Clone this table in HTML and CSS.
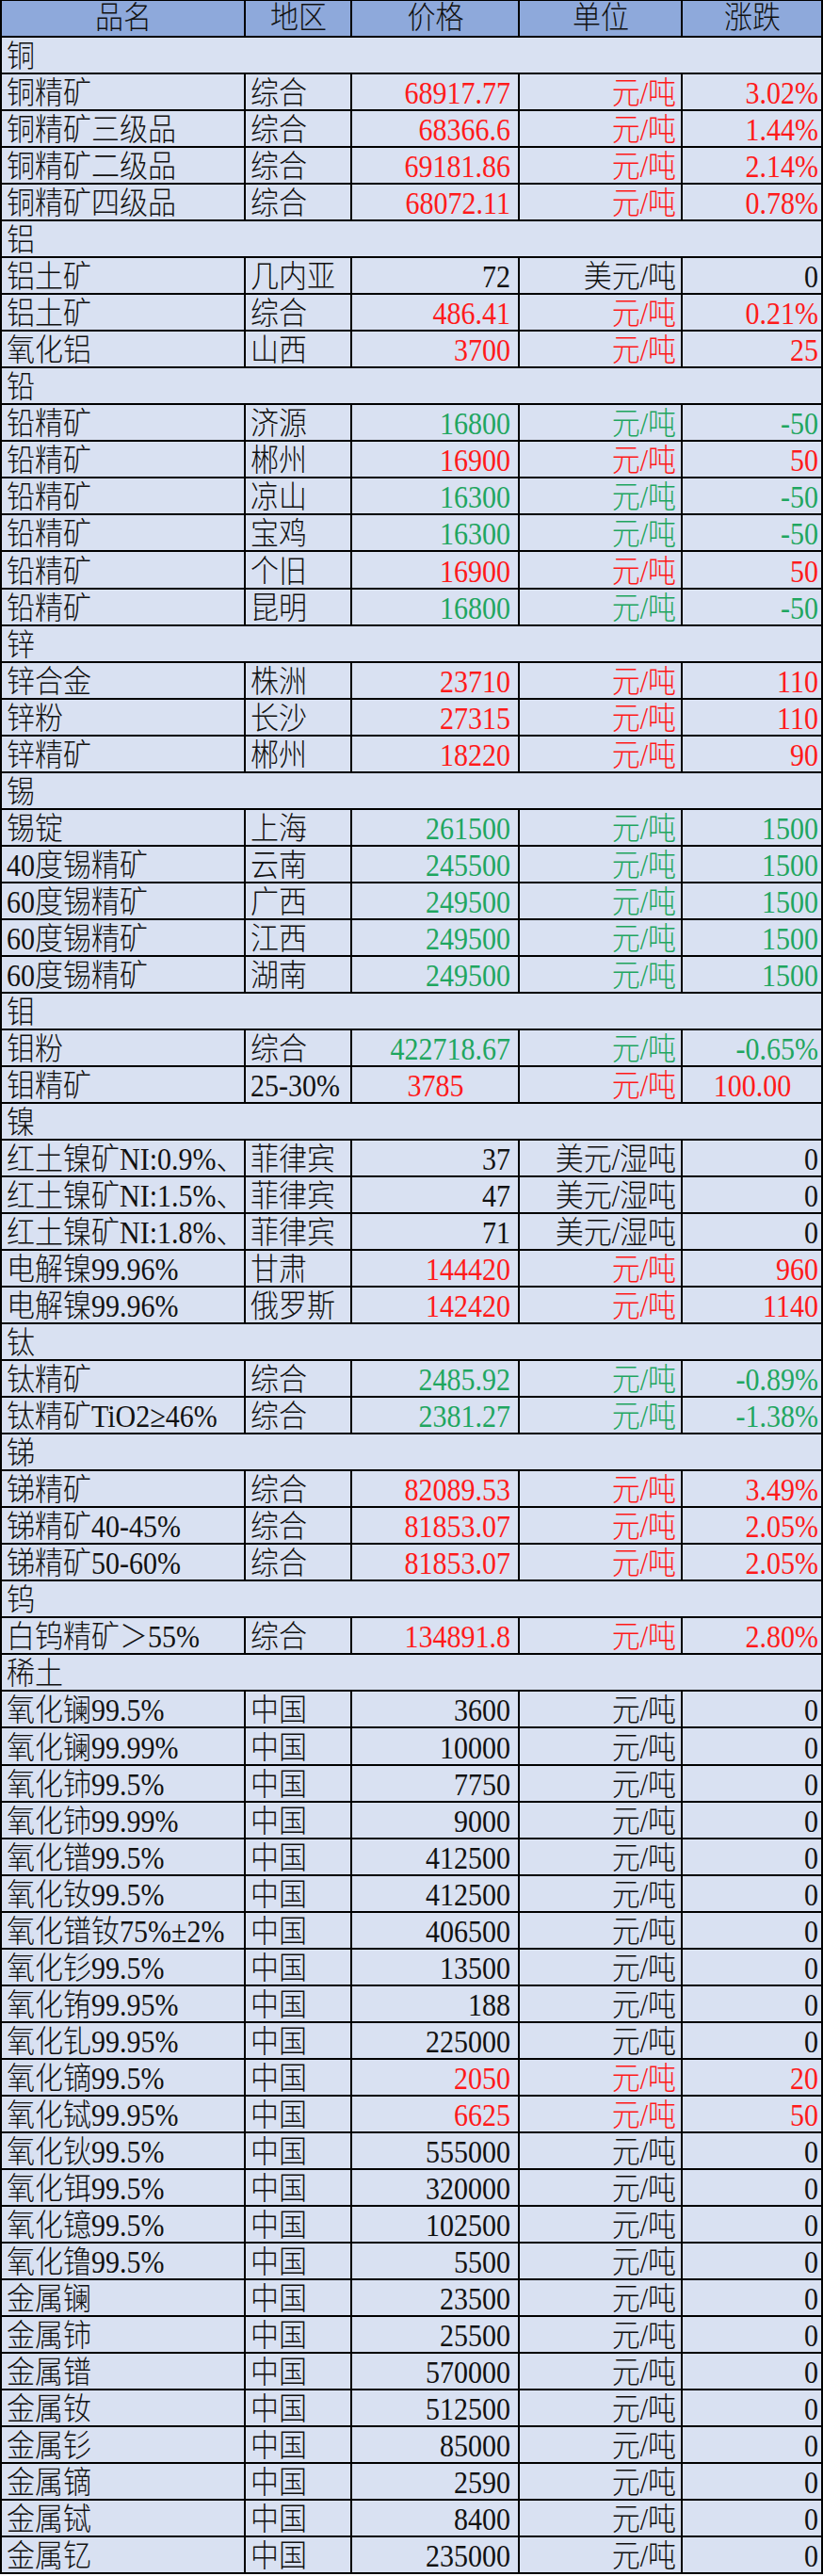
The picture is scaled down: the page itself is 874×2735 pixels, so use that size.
FILE: index.html
```html
<!DOCTYPE html>
<html lang="zh-CN">
<head>
<meta charset="utf-8">
<title>金属价格</title>
<link rel="stylesheet" href="styles.css">
</head>
<body>
<div class="t">
  <div class="c h"><span>品名</span></div><div class="c h"><span>地区</span></div><div class="c h"><span>价格</span></div><div class="c h"><span>单位</span></div><div class="c h"><span>涨跌</span></div>

  <div class="c sec"><span>铜</span></div>
  <div class="c"><span>铜精矿</span></div><div class="c"><span>综合</span></div><div class="c r red"><span>68917.77</span></div><div class="c u red"><span>元/吨</span></div><div class="c d red"><span>3.02%</span></div>
  <div class="c"><span>铜精矿三级品</span></div><div class="c"><span>综合</span></div><div class="c r red"><span>68366.6</span></div><div class="c u red"><span>元/吨</span></div><div class="c d red"><span>1.44%</span></div>
  <div class="c"><span>铜精矿二级品</span></div><div class="c"><span>综合</span></div><div class="c r red"><span>69181.86</span></div><div class="c u red"><span>元/吨</span></div><div class="c d red"><span>2.14%</span></div>
  <div class="c"><span>铜精矿四级品</span></div><div class="c"><span>综合</span></div><div class="c r red"><span>68072.11</span></div><div class="c u red"><span>元/吨</span></div><div class="c d red"><span>0.78%</span></div>

  <div class="c sec"><span>铝</span></div>
  <div class="c"><span>铝土矿</span></div><div class="c"><span>几内亚</span></div><div class="c r"><span>72</span></div><div class="c u"><span>美元/吨</span></div><div class="c d"><span>0</span></div>
  <div class="c"><span>铝土矿</span></div><div class="c"><span>综合</span></div><div class="c r red"><span>486.41</span></div><div class="c u red"><span>元/吨</span></div><div class="c d red"><span>0.21%</span></div>
  <div class="c"><span>氧化铝</span></div><div class="c"><span>山西</span></div><div class="c r red"><span>3700</span></div><div class="c u red"><span>元/吨</span></div><div class="c d red"><span>25</span></div>

  <div class="c sec"><span>铅</span></div>
  <div class="c"><span>铅精矿</span></div><div class="c"><span>济源</span></div><div class="c r grn"><span>16800</span></div><div class="c u grn"><span>元/吨</span></div><div class="c d grn"><span>-50</span></div>
  <div class="c"><span>铅精矿</span></div><div class="c"><span>郴州</span></div><div class="c r red"><span>16900</span></div><div class="c u red"><span>元/吨</span></div><div class="c d red"><span>50</span></div>
  <div class="c"><span>铅精矿</span></div><div class="c"><span>凉山</span></div><div class="c r grn"><span>16300</span></div><div class="c u grn"><span>元/吨</span></div><div class="c d grn"><span>-50</span></div>
  <div class="c"><span>铅精矿</span></div><div class="c"><span>宝鸡</span></div><div class="c r grn"><span>16300</span></div><div class="c u grn"><span>元/吨</span></div><div class="c d grn"><span>-50</span></div>
  <div class="c"><span>铅精矿</span></div><div class="c"><span>个旧</span></div><div class="c r red"><span>16900</span></div><div class="c u red"><span>元/吨</span></div><div class="c d red"><span>50</span></div>
  <div class="c"><span>铅精矿</span></div><div class="c"><span>昆明</span></div><div class="c r grn"><span>16800</span></div><div class="c u grn"><span>元/吨</span></div><div class="c d grn"><span>-50</span></div>

  <div class="c sec"><span>锌</span></div>
  <div class="c"><span>锌合金</span></div><div class="c"><span>株洲</span></div><div class="c r red"><span>23710</span></div><div class="c u red"><span>元/吨</span></div><div class="c d red"><span>110</span></div>
  <div class="c"><span>锌粉</span></div><div class="c"><span>长沙</span></div><div class="c r red"><span>27315</span></div><div class="c u red"><span>元/吨</span></div><div class="c d red"><span>110</span></div>
  <div class="c"><span>锌精矿</span></div><div class="c"><span>郴州</span></div><div class="c r red"><span>18220</span></div><div class="c u red"><span>元/吨</span></div><div class="c d red"><span>90</span></div>

  <div class="c sec"><span>锡</span></div>
  <div class="c"><span>锡锭</span></div><div class="c"><span>上海</span></div><div class="c r grn"><span>261500</span></div><div class="c u grn"><span>元/吨</span></div><div class="c d grn"><span>1500</span></div>
  <div class="c"><span>40度锡精矿</span></div><div class="c"><span>云南</span></div><div class="c r grn"><span>245500</span></div><div class="c u grn"><span>元/吨</span></div><div class="c d grn"><span>1500</span></div>
  <div class="c"><span>60度锡精矿</span></div><div class="c"><span>广西</span></div><div class="c r grn"><span>249500</span></div><div class="c u grn"><span>元/吨</span></div><div class="c d grn"><span>1500</span></div>
  <div class="c"><span>60度锡精矿</span></div><div class="c"><span>江西</span></div><div class="c r grn"><span>249500</span></div><div class="c u grn"><span>元/吨</span></div><div class="c d grn"><span>1500</span></div>
  <div class="c"><span>60度锡精矿</span></div><div class="c"><span>湖南</span></div><div class="c r grn"><span>249500</span></div><div class="c u grn"><span>元/吨</span></div><div class="c d grn"><span>1500</span></div>

  <div class="c sec"><span>钼</span></div>
  <div class="c"><span>钼粉</span></div><div class="c"><span>综合</span></div><div class="c r grn"><span>422718.67</span></div><div class="c u grn"><span>元/吨</span></div><div class="c d grn"><span>-0.65%</span></div>
  <div class="c"><span>钼精矿</span></div><div class="c"><span>25-30%</span></div><div class="c m red"><span>3785</span></div><div class="c u red"><span>元/吨</span></div><div class="c m red"><span>100.00</span></div>

  <div class="c sec"><span>镍</span></div>
  <div class="c"><span>红土镍矿NI:0.9%、</span></div><div class="c"><span>菲律宾</span></div><div class="c r"><span>37</span></div><div class="c u"><span>美元/湿吨</span></div><div class="c d"><span>0</span></div>
  <div class="c"><span>红土镍矿NI:1.5%、</span></div><div class="c"><span>菲律宾</span></div><div class="c r"><span>47</span></div><div class="c u"><span>美元/湿吨</span></div><div class="c d"><span>0</span></div>
  <div class="c"><span>红土镍矿NI:1.8%、</span></div><div class="c"><span>菲律宾</span></div><div class="c r"><span>71</span></div><div class="c u"><span>美元/湿吨</span></div><div class="c d"><span>0</span></div>
  <div class="c"><span>电解镍99.96%</span></div><div class="c"><span>甘肃</span></div><div class="c r red"><span>144420</span></div><div class="c u red"><span>元/吨</span></div><div class="c d red"><span>960</span></div>
  <div class="c"><span>电解镍99.96%</span></div><div class="c"><span>俄罗斯</span></div><div class="c r red"><span>142420</span></div><div class="c u red"><span>元/吨</span></div><div class="c d red"><span>1140</span></div>

  <div class="c sec"><span>钛</span></div>
  <div class="c"><span>钛精矿</span></div><div class="c"><span>综合</span></div><div class="c r grn"><span>2485.92</span></div><div class="c u grn"><span>元/吨</span></div><div class="c d grn"><span>-0.89%</span></div>
  <div class="c"><span>钛精矿TiO2≥46%</span></div><div class="c"><span>综合</span></div><div class="c r grn"><span>2381.27</span></div><div class="c u grn"><span>元/吨</span></div><div class="c d grn"><span>-1.38%</span></div>

  <div class="c sec"><span>锑</span></div>
  <div class="c"><span>锑精矿</span></div><div class="c"><span>综合</span></div><div class="c r red"><span>82089.53</span></div><div class="c u red"><span>元/吨</span></div><div class="c d red"><span>3.49%</span></div>
  <div class="c"><span>锑精矿40-45%</span></div><div class="c"><span>综合</span></div><div class="c r red"><span>81853.07</span></div><div class="c u red"><span>元/吨</span></div><div class="c d red"><span>2.05%</span></div>
  <div class="c"><span>锑精矿50-60%</span></div><div class="c"><span>综合</span></div><div class="c r red"><span>81853.07</span></div><div class="c u red"><span>元/吨</span></div><div class="c d red"><span>2.05%</span></div>

  <div class="c sec"><span>钨</span></div>
  <div class="c"><span>白钨精矿＞55%</span></div><div class="c"><span>综合</span></div><div class="c r red"><span>134891.8</span></div><div class="c u red"><span>元/吨</span></div><div class="c d red"><span>2.80%</span></div>

  <div class="c sec"><span>稀土</span></div>
  <div class="c"><span>氧化镧99.5%</span></div><div class="c"><span>中国</span></div><div class="c r"><span>3600</span></div><div class="c u"><span>元/吨</span></div><div class="c d"><span>0</span></div>
  <div class="c"><span>氧化镧99.99%</span></div><div class="c"><span>中国</span></div><div class="c r"><span>10000</span></div><div class="c u"><span>元/吨</span></div><div class="c d"><span>0</span></div>
  <div class="c"><span>氧化铈99.5%</span></div><div class="c"><span>中国</span></div><div class="c r"><span>7750</span></div><div class="c u"><span>元/吨</span></div><div class="c d"><span>0</span></div>
  <div class="c"><span>氧化铈99.99%</span></div><div class="c"><span>中国</span></div><div class="c r"><span>9000</span></div><div class="c u"><span>元/吨</span></div><div class="c d"><span>0</span></div>
  <div class="c"><span>氧化镨99.5%</span></div><div class="c"><span>中国</span></div><div class="c r"><span>412500</span></div><div class="c u"><span>元/吨</span></div><div class="c d"><span>0</span></div>
  <div class="c"><span>氧化钕99.5%</span></div><div class="c"><span>中国</span></div><div class="c r"><span>412500</span></div><div class="c u"><span>元/吨</span></div><div class="c d"><span>0</span></div>
  <div class="c"><span>氧化镨钕75%±2%</span></div><div class="c"><span>中国</span></div><div class="c r"><span>406500</span></div><div class="c u"><span>元/吨</span></div><div class="c d"><span>0</span></div>
  <div class="c"><span>氧化钐99.5%</span></div><div class="c"><span>中国</span></div><div class="c r"><span>13500</span></div><div class="c u"><span>元/吨</span></div><div class="c d"><span>0</span></div>
  <div class="c"><span>氧化铕99.95%</span></div><div class="c"><span>中国</span></div><div class="c r"><span>188</span></div><div class="c u"><span>元/吨</span></div><div class="c d"><span>0</span></div>
  <div class="c"><span>氧化钆99.95%</span></div><div class="c"><span>中国</span></div><div class="c r"><span>225000</span></div><div class="c u"><span>元/吨</span></div><div class="c d"><span>0</span></div>
  <div class="c"><span>氧化镝99.5%</span></div><div class="c"><span>中国</span></div><div class="c r red"><span>2050</span></div><div class="c u red"><span>元/吨</span></div><div class="c d red"><span>20</span></div>
  <div class="c"><span>氧化铽99.95%</span></div><div class="c"><span>中国</span></div><div class="c r red"><span>6625</span></div><div class="c u red"><span>元/吨</span></div><div class="c d red"><span>50</span></div>
  <div class="c"><span>氧化钬99.5%</span></div><div class="c"><span>中国</span></div><div class="c r"><span>555000</span></div><div class="c u"><span>元/吨</span></div><div class="c d"><span>0</span></div>
  <div class="c"><span>氧化铒99.5%</span></div><div class="c"><span>中国</span></div><div class="c r"><span>320000</span></div><div class="c u"><span>元/吨</span></div><div class="c d"><span>0</span></div>
  <div class="c"><span>氧化镱99.5%</span></div><div class="c"><span>中国</span></div><div class="c r"><span>102500</span></div><div class="c u"><span>元/吨</span></div><div class="c d"><span>0</span></div>
  <div class="c"><span>氧化镥99.5%</span></div><div class="c"><span>中国</span></div><div class="c r"><span>5500</span></div><div class="c u"><span>元/吨</span></div><div class="c d"><span>0</span></div>
  <div class="c"><span>金属镧</span></div><div class="c"><span>中国</span></div><div class="c r"><span>23500</span></div><div class="c u"><span>元/吨</span></div><div class="c d"><span>0</span></div>
  <div class="c"><span>金属铈</span></div><div class="c"><span>中国</span></div><div class="c r"><span>25500</span></div><div class="c u"><span>元/吨</span></div><div class="c d"><span>0</span></div>
  <div class="c"><span>金属镨</span></div><div class="c"><span>中国</span></div><div class="c r"><span>570000</span></div><div class="c u"><span>元/吨</span></div><div class="c d"><span>0</span></div>
  <div class="c"><span>金属钕</span></div><div class="c"><span>中国</span></div><div class="c r"><span>512500</span></div><div class="c u"><span>元/吨</span></div><div class="c d"><span>0</span></div>
  <div class="c"><span>金属钐</span></div><div class="c"><span>中国</span></div><div class="c r"><span>85000</span></div><div class="c u"><span>元/吨</span></div><div class="c d"><span>0</span></div>
  <div class="c"><span>金属镝</span></div><div class="c"><span>中国</span></div><div class="c r"><span>2590</span></div><div class="c u"><span>元/吨</span></div><div class="c d"><span>0</span></div>
  <div class="c"><span>金属铽</span></div><div class="c"><span>中国</span></div><div class="c r"><span>8400</span></div><div class="c u"><span>元/吨</span></div><div class="c d"><span>0</span></div>
  <div class="c"><span>金属钇</span></div><div class="c"><span>中国</span></div><div class="c r"><span>235000</span></div><div class="c u"><span>元/吨</span></div><div class="c d"><span>0</span></div>
</div>
</body>
</html>
```

FILE: styles.css
```css
html, body {
  margin: 0;
  padding: 0;
  background: #ffffff;
}

.t {
  width: 872px;
  display: grid;
  grid-template-columns: 259px 113px 178px 173px 149px;
  grid-auto-rows: 39.04px;
  border-left: 2px solid #000;
  border-top: 1px solid #000;
  background: #d9e1f2;
  font-family: "Liberation Serif", "Noto Sans CJK SC", serif;
  font-size: 30px;
  font-weight: 300;
  line-height: 1;
  color: #111;
}

.c {
  box-sizing: border-box;
  border-right: 2px solid #000;
  border-bottom: 2px solid #000;
  display: flex;
  align-items: flex-end;
  justify-content: flex-start;
  padding: 0 4px 1px 5px;
  white-space: nowrap;
  overflow: hidden;
}

.c span {
  display: inline-block;
  transform: scaleY(1.1);
  transform-origin: 50% 100%;
}

.h {
  background: #8ea9db;
  justify-content: center;
  padding-bottom: 3px;
}

.sec {
  grid-column: 1 / -1;
}

.r {
  justify-content: flex-end;
  padding-right: 8px;
}

.u {
  justify-content: flex-end;
  padding-right: 5px;
}

.d {
  justify-content: flex-end;
  padding-right: 3px;
}

.m {
  justify-content: center;
}

.red {
  color: #ff1a1a;
}

.grn {
  color: #1fa660;
}
```
